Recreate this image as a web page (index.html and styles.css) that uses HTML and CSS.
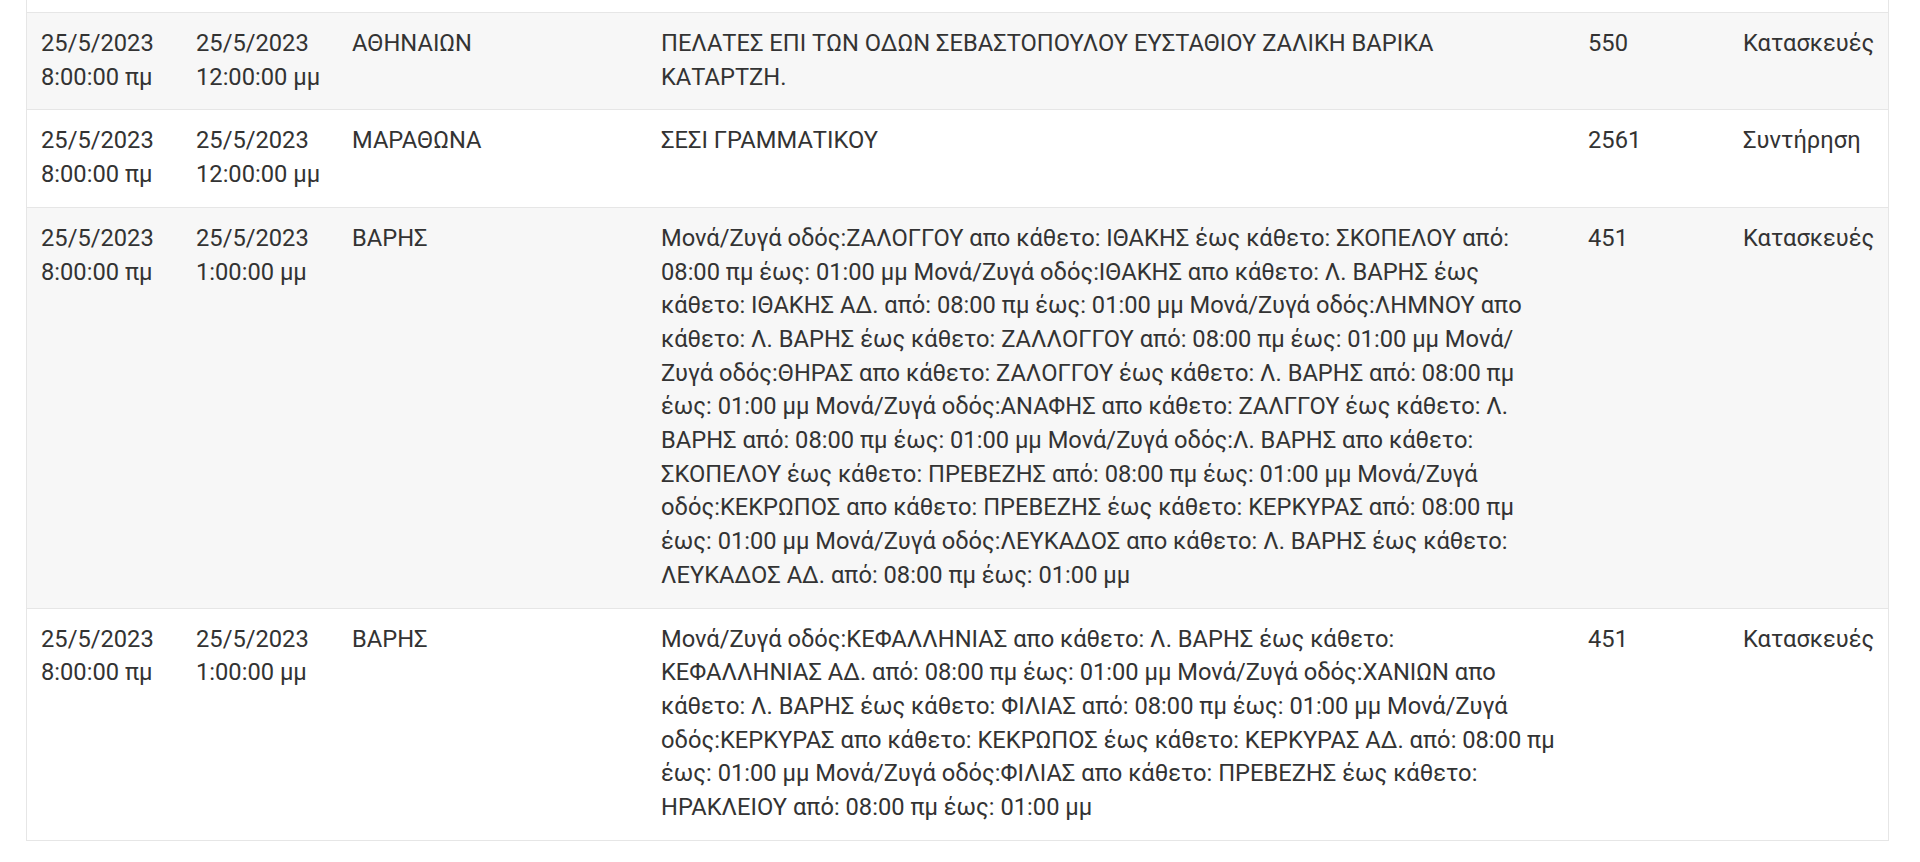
FILE: index.html
```html
<!DOCTYPE html>
<html lang="el">
<head>
    <meta charset="UTF-8">
    <meta name="viewport" content="width=device-width, initial-scale=1.0">
    <title>Διακοπές ρεύματος</title>
    <link rel="stylesheet" href="styles.css">
</head>
<body>
    <div class="container">
        <div class="table-wrap">
            <table class="outages">
                <colgroup>
                    <col class="col-from">
                    <col class="col-to">
                    <col class="col-area">
                    <col class="col-desc">
                    <col class="col-code">
                    <col class="col-type">
                </colgroup>
                <tbody>
                    <tr>
                        <td>25/5/2023 8:00:00 πμ</td>
                        <td>25/5/2023 12:00:00 μμ</td>
                        <td>ΑΘΗΝΑΙΩΝ</td>
                        <td class="desc">ΠΕΛΑΤΕΣ ΕΠΙ ΤΩΝ ΟΔΩΝ ΣΕΒΑΣΤΟΠΟΥΛΟΥ ΕΥΣΤΑΘΙΟΥ ΖΑΛΙΚΗ ΒΑΡΙΚΑ ΚΑΤΑΡΤΖΗ.</td>
                        <td>550</td>
                        <td>Κατασκευές</td>
                    </tr>
                    <tr>
                        <td>25/5/2023 8:00:00 πμ</td>
                        <td>25/5/2023 12:00:00 μμ</td>
                        <td>ΜΑΡΑΘΩΝΑ</td>
                        <td class="desc">ΣΕΣΙ ΓΡΑΜΜΑΤΙΚΟΥ</td>
                        <td>2561</td>
                        <td>Συντήρηση</td>
                    </tr>
                    <tr>
                        <td>25/5/2023 8:00:00 πμ</td>
                        <td>25/5/2023 1:00:00 μμ</td>
                        <td>ΒΑΡΗΣ</td>
                        <td class="desc">Μονά/Ζυγά οδός:ΖΑΛΟΓΓΟΥ απο κάθετο: ΙΘΑΚΗΣ έως κάθετο: ΣΚΟΠΕΛΟΥ από: 08:00 πμ έως: 01:00 μμ Μονά/Ζυγά οδός:ΙΘΑΚΗΣ απο κάθετο: Λ. ΒΑΡΗΣ έως κάθετο: ΙΘΑΚΗΣ ΑΔ. από: 08:00 πμ έως: 01:00 μμ Μονά/Ζυγά οδός:ΛΗΜΝΟΥ απο κάθετο: Λ. ΒΑΡΗΣ έως κάθετο: ΖΑΛΛΟΓΓΟΥ από: 08:00 πμ έως: 01:00 μμ Μονά/Ζυγά οδός:ΘΗΡΑΣ απο κάθετο: ΖΑΛΟΓΓΟΥ έως κάθετο: Λ. ΒΑΡΗΣ από: 08:00 πμ έως: 01:00 μμ Μονά/Ζυγά οδός:ΑΝΑΦΗΣ απο κάθετο: ΖΑΛΓΓΟΥ έως κάθετο: Λ. ΒΑΡΗΣ από: 08:00 πμ έως: 01:00 μμ Μονά/Ζυγά οδός:Λ. ΒΑΡΗΣ απο κάθετο: ΣΚΟΠΕΛΟΥ έως κάθετο: ΠΡΕΒΕΖΗΣ από: 08:00 πμ έως: 01:00 μμ Μονά/Ζυγά οδός:ΚΕΚΡΩΠΟΣ απο κάθετο: ΠΡΕΒΕΖΗΣ έως κάθετο: ΚΕΡΚΥΡΑΣ από: 08:00 πμ έως: 01:00 μμ Μονά/Ζυγά οδός:ΛΕΥΚΑΔΟΣ απο κάθετο: Λ. ΒΑΡΗΣ έως κάθετο: ΛΕΥΚΑΔΟΣ ΑΔ. από: 08:00 πμ έως: 01:00 μμ</td>
                        <td>451</td>
                        <td>Κατασκευές</td>
                    </tr>
                    <tr>
                        <td>25/5/2023 8:00:00 πμ</td>
                        <td>25/5/2023 1:00:00 μμ</td>
                        <td>ΒΑΡΗΣ</td>
                        <td class="desc">Μονά/Ζυγά οδός:ΚΕΦΑΛΛΗΝΙΑΣ απο κάθετο: Λ. ΒΑΡΗΣ έως κάθετο: ΚΕΦΑΛΛΗΝΙΑΣ ΑΔ. από: 08:00 πμ έως: 01:00 μμ Μονά/Ζυγά οδός:ΧΑΝΙΩΝ απο κάθετο: Λ. ΒΑΡΗΣ έως κάθετο: ΦΙΛΙΑΣ από: 08:00 πμ έως: 01:00 μμ Μονά/Ζυγά οδός:ΚΕΡΚΥΡΑΣ απο κάθετο: ΚΕΚΡΩΠΟΣ έως κάθετο: ΚΕΡΚΥΡΑΣ ΑΔ. από: 08:00 πμ έως: 01:00 μμ Μονά/Ζυγά οδός:ΦΙΛΙΑΣ απο κάθετο: ΠΡΕΒΕΖΗΣ έως κάθετο: ΗΡΑΚΛΕΙΟΥ από: 08:00 πμ έως: 01:00 μμ</td>
                        <td>451</td>
                        <td>Κατασκευές</td>
                    </tr>
                </tbody>
            </table>
        </div>
    </div>
</body>
</html>
```

FILE: styles.css
```css
body {
    font-family: Roboto, "Noto Sans", Arial, sans-serif;
    font-size: 23.7px;
    line-height: 33.7px;
    color: #333;
    background-color: #fff;
    margin: 0;
    padding: 0;
}

.container {
    padding: 0 31px 0 26px;
}

.table-wrap {
    border: 1px solid #e6e6e6;
    border-top: none;
    padding-top: 12px;
}

.outages {
    width: 100%;
    border-collapse: collapse;
    table-layout: fixed;
}

.col-from { width: 155px; }
.col-to { width: 156px; }
.col-area { width: 309px; }
.col-desc { width: 927px; }
.col-code { width: 155px; }
.col-type { width: 159px; }

.outages td {
    padding: 14px 14px 15px 14px;
    vertical-align: top;
    border-top: 1px solid #e6e6e6;
}

.outages td.desc {
    padding-right: 16px;
}

.outages tr:nth-child(odd) td {
    background-color: #f7f7f7;
}
```
